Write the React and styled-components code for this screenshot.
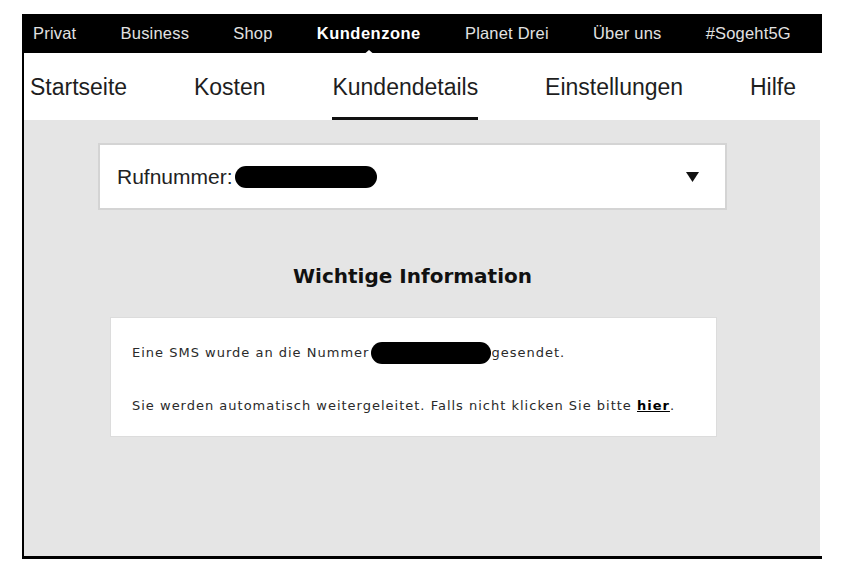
import React from "react";
import styled, { createGlobalStyle } from "styled-components";

const GlobalStyle = createGlobalStyle`
  body {
    margin: 0;
    background: #fff;
    font-family: "Liberation Sans", Arial, sans-serif;
  }
`;

// STYLED
const Frame = styled.div`
  margin: 14px 0 0 22px;
  width: 798px;
  height: 542px;
  border-left: 2px solid #000;
  border-bottom: 3px solid #000;
  display: flex;
  flex-direction: column;
`;

const TopBar = styled.nav`
  height: 39px;
  flex: none;
  background: #000;
  margin-left: -2px;
  padding: 0 31px 0 11px;
  display: flex;
  align-items: center;
  justify-content: space-between;
`;

const TopItem = styled.a`
  position: relative;
  font-size: 16.5px;
  color: ${(p) => (p.$active ? "#fff" : "#e2e2e2")};
  font-weight: ${(p) => (p.$active ? 700 : 400)};
  letter-spacing: ${(p) => (p.$active ? "0.5px" : "0.2px")};

  ${(p) =>
    p.$active &&
    `
    &::after {
      content: "";
      position: absolute;
      left: 50%;
      bottom: -13px;
      margin-left: -7px;
      border-left: 7px solid transparent;
      border-right: 7px solid transparent;
      border-bottom: 6px solid #fff;
    }
  `}
`;

const SubNav = styled.nav`
  height: 67px;
  flex: none;
  background: #fff;
  padding: 0 26px 0 6px;
  display: flex;
  justify-content: space-between;
`;

const SubItem = styled.a`
  display: flex;
  align-items: center;
  padding-top: 4px;
  font-size: 23px;
  color: #1e1e1e;
  border-bottom: 3px solid ${(p) => (p.$active ? "#111" : "transparent")};
`;

const Panel = styled.main`
  flex: 1;
  background: #e5e5e5;
  margin-right: 2px;
  padding: 23px 0 0 74px;
`;

const Column = styled.div`
  width: 629px;
  display: flex;
  flex-direction: column;
`;

const Select = styled.div`
  box-sizing: border-box;
  height: 67px;
  background: #fff;
  border: 2px solid #d4d4d4;
  padding: 0 26px 0 17px;
  display: flex;
  align-items: center;
`;

const SelectLabel = styled.span`
  font-size: 21px;
  color: #222;
`;

const Redacted = styled.span`
  display: inline-block;
  vertical-align: middle;
  width: ${(p) => p.$w}px;
  height: ${(p) => p.$h}px;
  border-radius: ${(p) => p.$h / 2}px;
  background: #000;
  margin-left: 2px;
`;

const Caret = styled.svg`
  margin-left: auto;
`;

const Heading = styled.h2`
  margin: 54px 0 0;
  font-family: "DejaVu Sans", Verdana, sans-serif;
  font-size: 20px;
  line-height: 24px;
  font-weight: 700;
  color: #111;
  text-align: center;
`;

const InfoBox = styled.section`
  box-sizing: border-box;
  margin: 29px 0 0 12px;
  width: 607px;
  height: 120px;
  background: #fff;
  border: 1px solid #dcdcdc;
  padding: 24px 21px;
`;

const InfoText = styled.p`
  margin: 0 0 32px;
  font-family: "DejaVu Sans", Verdana, sans-serif;
  font-size: 13px;
  line-height: 20px;
  letter-spacing: 1px;
  color: #2a2a2a;
  white-space: nowrap;

  &:last-child {
    margin-bottom: 0;
  }
`;

const Link = styled.a`
  font-weight: 700;
  color: #000;
  text-decoration: underline;
`;

const topItems = ["Privat", "Business", "Shop", "Kundenzone", "Planet Drei", "Über uns", "#Sogeht5G"];
const subItems = ["Startseite", "Kosten", "Kundendetails", "Einstellungen", "Hilfe"];

export default function App() {
  return (
    <>
      <GlobalStyle />
      <Frame>
        <TopBar>
          {topItems.map((item) => (
            <TopItem key={item} $active={item === "Kundenzone"}>
              {item}
            </TopItem>
          ))}
        </TopBar>
        <SubNav>
          {subItems.map((item) => (
            <SubItem key={item} $active={item === "Kundendetails"}>
              {item}
            </SubItem>
          ))}
        </SubNav>
        <Panel>
          <Column>
            <Select>
              <SelectLabel>Rufnummer:</SelectLabel>
              <Redacted $w={142} $h={22} />
              <Caret width="13" height="10" viewBox="0 0 13 10">
                <polygon points="0,0 13,0 6.5,10" fill="#111" />
              </Caret>
            </Select>
            <Heading>Wichtige Information</Heading>
            <InfoBox>
              <InfoText>
                Eine SMS wurde an die Nummer
                <Redacted $w={120} $h={22} />
                gesendet.
              </InfoText>
              <InfoText>
                Sie werden automatisch weitergeleitet. Falls nicht klicken Sie bitte <Link>hier</Link>.
              </InfoText>
            </InfoBox>
          </Column>
        </Panel>
      </Frame>
    </>
  );
}
